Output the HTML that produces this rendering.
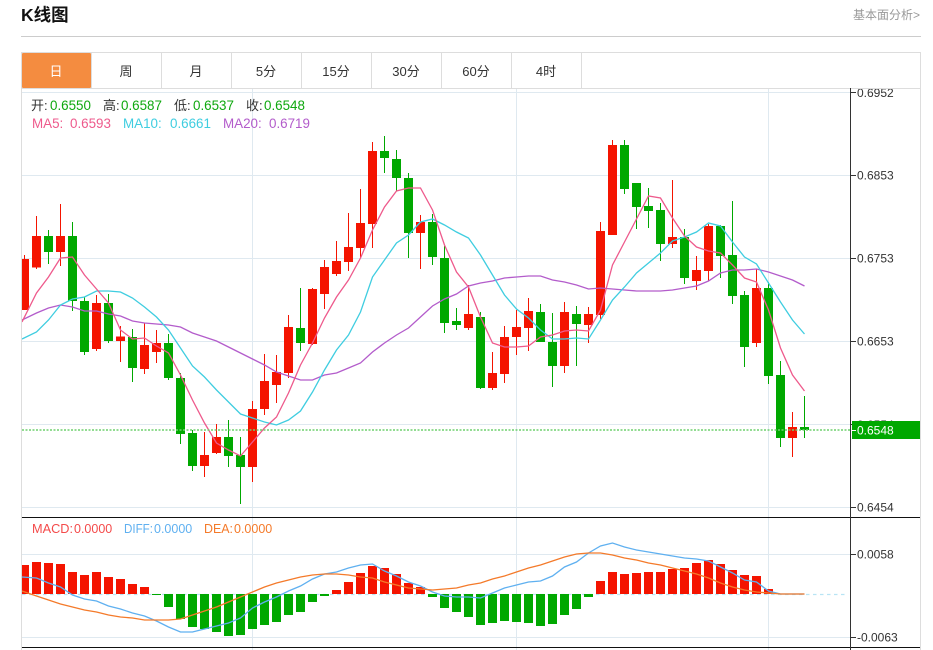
<!DOCTYPE html>
<html lang="zh">
<head>
<meta charset="utf-8">
<title>K线图</title>
<style>
html,body{margin:0;padding:0;background:#fff;width:933px;height:650px;overflow:hidden}
svg{display:block;position:absolute;left:0;top:0}
text{font-family:"Liberation Sans","Noto Sans CJK SC",sans-serif}
</style>
</head>
<body>
<svg width="933" height="650" viewBox="0 0 933 650" xmlns="http://www.w3.org/2000/svg">
<defs>
<clipPath id="c"><rect x="22" y="89" width="829" height="561"/></clipPath>
<clipPath id="ax"><rect x="852" y="89" width="68" height="561"/></clipPath>
</defs>

<!-- header -->
<text x="21" y="21" font-size="17.5" font-weight="700" fill="#111">K线图</text>
<text x="853" y="19" font-size="12" fill="#999">基本面分析&gt;</text>
<rect x="21" y="36" width="900" height="1" fill="#ccc"/>

<!-- frame -->
<rect x="21" y="52" width="900" height="1" fill="#ddd"/>
<rect x="21" y="52" width="1" height="598" fill="#ddd"/>
<rect x="920" y="52" width="1" height="598" fill="#ddd"/>
<rect x="22" y="88" width="898" height="1" fill="#ddd"/>
<rect x="22" y="53" width="69" height="35" rx="1" fill="#f48c40"/>
<path d="M91.5 53V88M161.5 53V88M231.5 53V88M301.5 53V88M371.5 53V88M441.5 53V88M511.5 53V88M581.5 53V88" stroke="#ddd" stroke-width="1" fill="none"/>
<g font-size="13" fill="#333" text-anchor="middle">
<text x="56" y="76" fill="#fff">日</text>
<text x="126" y="76">周</text>
<text x="196" y="76">月</text>
<text x="266" y="76">5分</text>
<text x="336" y="76">15分</text>
<text x="406" y="76">30分</text>
<text x="476" y="76">60分</text>
<text x="546" y="76">4时</text>
</g>

<!-- grid -->
<path d="M22 92.5H851M22 175.5H851M22 258.5H851M22 341.5H851M22 424.5H851M22 507.5H851M22 554.5H851M22 637.5H851M252.5 89V650M516.5 89V650M768.5 89V650" stroke="#dfe9f0" stroke-width="1" fill="none"/>

<g clip-path="url(#c)">
<!-- wicks -->
<path fill="none" stroke="#f41400" stroke-width="1" d="M24.5 255V310M36.5 216V269M60.5 204V266M96.5 295V351M120.5 326V362M144.5 323V374M156.5 330V363M204.5 432V477M216.5 424V454M252.5 401V482M264.5 354V415M276.5 355V403M288.5 315V378M312.5 288V345M324.5 260V309M336.5 241V276M348.5 213V271M360.5 189V258M372.5 142V248M420.5 215V269M468.5 285V330M492.5 352V390M504.5 326V383M516.5 310V355M528.5 298V351M564.5 302V373M588.5 307V343M600.5 222V319M612.5 140V235M672.5 180V248M696.5 256V290M708.5 224V281M756.5 269V347M792.5 412V457"/>
<path fill="none" stroke="#00a800" stroke-width="1" d="M48.5 230V264M72.5 222V311M84.5 297V355M108.5 294V343M132.5 329V382M168.5 334V380M180.5 373V444M192.5 430V471M228.5 420V467M240.5 437V504M300.5 288V351M384.5 136V173M396.5 150V191M408.5 173V258M432.5 214V265M444.5 246V333M456.5 308V330M480.5 312V389M540.5 304V342M552.5 313V387M576.5 306V366M624.5 140V194M636.5 183V229M648.5 188V228M660.5 203V261M684.5 229V284M720.5 225V278M732.5 201V304M744.5 291V367M768.5 282V384M780.5 361V447M804.5 396V438"/>
<!-- bodies -->
<path fill="#f41400" d="M20 259h9V310h-9zM32 236h9V267.5h-9zM56 236h9V252h-9zM92 303h9V349h-9zM116 336.500h9V341h-9zM140 345h9V369h-9zM152 343h9V352h-9zM200 455h9V466h-9zM212 437h9V453h-9zM248 409h9V467h-9zM260 381h9V409h-9zM272 372h9V385h-9zM284 327h9V373h-9zM308 289h9V344h-9zM320 267h9V294h-9zM332 261h9V274h-9zM344 247h9V262h-9zM356 223h9V248h-9zM368 151h9V224h-9zM416 222h9V233h-9zM464 314h9V328h-9zM488 373h9V388h-9zM500 337h9V374h-9zM512 327h9V337h-9zM524 311h9V328h-9zM560 312h9V366h-9zM584 314h9V325h-9zM596 231h9V315h-9zM608 145h9V235h-9zM668 237h9V244h-9zM692 270h9V281h-9zM704 226h9V271h-9zM752 288h9V343h-9zM788 427h9V438h-9z"/>
<path fill="#00a800" d="M44 236h9V252h-9zM68 236h9V301h-9zM80 301h9V352h-9zM104 303h9V341h-9zM128 337h9V368h-9zM164 343h9V378h-9zM176 378h9V434h-9zM188 433h9V466h-9zM224 437h9V456h-9zM236 455h9V467h-9zM296 328h9V343h-9zM380 151h9V158h-9zM392 159h9V178h-9zM404 178h9V233h-9zM428 222h9V257h-9zM440 258h9V323h-9zM452 321h9V325h-9zM476 317h9V388h-9zM536 312h9V342h-9zM548 342h9V366h-9zM572 314h9V324h-9zM620 145h9V189h-9zM632 183h9V207h-9zM644 206h9V211h-9zM656 210h9V244h-9zM680 237h9V278h-9zM716 226h9V256h-9zM728 255h9V296h-9zM740 295h9V347h-9zM764 288h9V376h-9zM776 375h9V438h-9zM800 427h9V430h-9z"/>
<!-- MA lines -->
<polyline fill="none" stroke="#b35ccb" stroke-width="1.3" points="22,320 36.500,313 48.500,308 60.500,305 72.500,307 84.500,311 96.500,311 108.500,314 120.500,316 132.500,321 144.500,323 156.500,324 168.500,325 180.500,327 192.500,333 204.500,337 216.500,341 228.500,347 240.500,353 252.500,359 264.500,365 276.500,372 288.500,376 300.500,380 312.500,380 324.500,375 336.500,373 348.500,368 360.500,363 372.500,352 384.500,343 396.500,335 408.500,328 420.500,317 432.500,306 444.500,299 456.500,294 468.500,286 480.500,283 492.500,281 504.500,278 516.500,277 528.500,276 540.500,276 552.500,280 564.500,282 576.500,285 588.500,289 600.500,288 612.500,289 624.500,290 636.500,291 648.500,291 660.500,291 672.500,290 684.500,288 696.500,286 708.500,281 720.500,273 732.500,270 744.500,270 756.500,269 768.500,272 780.500,276 792.500,280 804.500,286"/>
<polyline fill="none" stroke="#3fcde0" stroke-width="1.3" points="22,339 36.500,332 48.500,320 60.500,305 72.500,299 84.500,297 96.500,291 108.500,291 120.500,292 132.500,298 144.500,307 156.500,317 168.500,330 180.500,348 192.500,366 204.500,377 216.500,390 228.500,402 240.500,414 252.500,418 264.500,422 276.500,425 288.500,420 300.500,411 312.500,392 324.500,370 336.500,350 348.500,335 360.500,312 372.500,277 384.500,260 396.500,243 408.500,235 420.500,222 432.500,219 444.500,225 456.500,232 468.500,238 480.500,255 492.500,275 504.500,295 516.500,309 528.500,318 540.500,330 552.500,339 564.500,339 576.500,338 588.500,339 600.500,320 612.500,300 624.500,287 636.500,273 648.500,263 660.500,253 672.500,241 684.500,237 696.500,232 708.500,223 720.500,226 732.500,242 744.500,257 756.500,264 768.500,283 780.500,302 792.500,320 804.500,334"/>
<polyline fill="none" stroke="#ee5a8c" stroke-width="1.3" points="22,322 36.500,293 48.500,277 60.500,258 72.500,257 84.500,275 96.500,289 108.500,303 120.500,330 132.500,339 144.500,338 156.500,346 168.500,353 180.500,375 192.500,400 204.500,423 216.500,443 228.500,450 240.500,456 252.500,442 264.500,428 276.500,417 288.500,393 300.500,365 312.500,343 324.500,318 336.500,297 348.500,280 360.500,258 372.500,230 384.500,207 396.500,191 408.500,188 420.500,188 432.500,210 444.500,245 456.500,272 468.500,287 480.500,317 492.500,343 504.500,347 516.500,347 528.500,346 540.500,337 552.500,335 564.500,331 576.500,330 588.500,331 600.500,310 612.500,265 624.500,242 636.500,219 648.500,196 660.500,198 672.500,218 684.500,236 696.500,247 708.500,251 720.500,253 732.500,265 744.500,278 756.500,282 768.500,310 780.500,348 792.500,375 804.500,391"/>

<!-- price dotted -->
<path d="M22 430H851" stroke="#6fd06f" stroke-width="1.6" stroke-dasharray="2 1.500" fill="none"/>

<!-- MACD zero dashed -->
<path d="M22 594.500H848" stroke="#b8e4f4" stroke-width="1.3" stroke-dasharray="3.500 3.500" fill="none"/>
<!-- MACD bars -->
<path fill="#f41400" d="M20 565h9V594h-9zM32 562h9V594h-9zM44 563h9V594h-9zM56 564h9V594h-9zM68 572h9V594h-9zM80 575h9V594h-9zM92 572h9V594h-9zM104 577h9V594h-9zM116 579h9V594h-9zM128 584h9V594h-9zM140 587h9V594h-9zM332 590h9V594h-9zM344 582h9V594h-9zM356 573h9V594h-9zM368 566h9V594h-9zM380 568h9V594h-9zM392 574h9V594h-9zM404 583h9V594h-9zM416 587h9V594h-9zM608 572h9V594h-9zM596 581h9V594h-9zM620 574h9V594h-9zM632 573h9V594h-9zM644 572h9V594h-9zM656 572h9V594h-9zM668 569h9V594h-9zM680 568h9V594h-9zM692 563h9V594h-9zM704 560h9V594h-9zM716 564h9V594h-9zM728 570h9V594h-9zM740 575h9V594h-9zM752 576h9V594h-9zM764 589h9V594h-9z"/>
<path fill="#00a800" d="M152 594h9V595h-9zM164 594h9V607h-9zM176 594h9V619h-9zM188 594h9V627h-9zM200 594h9V629h-9zM212 594h9V632h-9zM224 594h9V636h-9zM236 594h9V635h-9zM248 594h9V629h-9zM260 594h9V625h-9zM272 594h9V622h-9zM284 594h9V615h-9zM296 594h9V612h-9zM308 594h9V602h-9zM320 594h9V596h-9zM428 594h9V597h-9zM440 594h9V608h-9zM452 594h9V612h-9zM464 594h9V617h-9zM476 594h9V625h-9zM488 594h9V623h-9zM500 594h9V621h-9zM512 594h9V622h-9zM524 594h9V623h-9zM536 594h9V626h-9zM548 594h9V624h-9zM560 594h9V615h-9zM572 594h9V609h-9zM584 594h9V597h-9z"/>
<!-- DIFF / DEA -->
<polyline fill="none" stroke="#5fb0f0" stroke-width="1.3" points="22,577 36.500,578 48.500,583 60.500,587 72.500,595 84.500,599 96.500,601 108.500,606 120.500,609 132.500,613 144.500,616 156.500,621 168.500,627 180.500,632 192.500,632 204.500,629 216.500,626 228.500,623 240.500,618 252.500,608 264.500,602 276.500,597 288.500,591 300.500,586 312.500,579 324.500,574 336.500,572 348.500,568 360.500,565 372.500,564 384.500,571 396.500,576 408.500,582 420.500,586 432.500,592 444.500,596 456.500,597 468.500,597 480.500,598 492.500,593 504.500,588 516.500,585 528.500,582 540.500,581 552.500,576 564.500,567 576.500,562 588.500,553 600.500,546 612.500,543 624.500,547 636.500,550 648.500,552 660.500,554 672.500,556 684.500,558 696.500,559 708.500,561 720.500,567 732.500,573 744.500,580 756.500,582 768.500,591 780.500,594 804.500,594"/>
<polyline fill="none" stroke="#f47a2a" stroke-width="1.3" points="22,591 36.500,596 48.500,600 60.500,604 72.500,607 84.500,610 96.500,612 108.500,615 120.500,617 132.500,618 144.500,620 156.500,620 168.500,620 180.500,619 192.500,615 204.500,611 216.500,607 228.500,602 240.500,597 252.500,592 264.500,587 276.500,583 288.500,580 300.500,577 312.500,575 324.500,574 336.500,574 348.500,575 360.500,577 372.500,578 384.500,582 396.500,585 408.500,588 420.500,589 432.500,590 444.500,589 456.500,588 468.500,585 480.500,583 492.500,579 504.500,576 516.500,572 528.500,568 540.500,565 552.500,561 564.500,557 576.500,554 588.500,553 600.500,553 612.500,555 624.500,558 636.500,560 648.500,563 660.500,565 672.500,568 684.500,571 696.500,574 708.500,578 720.500,583 732.500,587 744.500,590 756.500,592 768.500,593 780.500,594 804.500,594"/>
</g>

<!-- separators -->
<rect x="22" y="517" width="898" height="1" fill="#111"/>
<rect x="22" y="647" width="898" height="1" fill="#111"/>

<!-- axis -->
<rect x="850" y="88" width="1" height="562" fill="#333"/>
<path d="M851 92.500h5M851 175.500h5M851 258.500h5M851 341.500h5M851 424.500h5M851 507.500h5M851 554.500h5M851 637.500h5" stroke="#333" stroke-width="1" fill="none"/>
<g font-size="12" fill="#333" clip-path="url(#ax)">
<text x="857" y="97">0.6952</text>
<text x="857" y="179.500">0.6853</text>
<text x="857" y="262.500">0.6753</text>
<text x="857" y="345.500">0.6653</text>
<text x="857" y="429">0.6554</text>
<text x="857" y="511.500">0.6454</text>
<text x="857" y="558.500">0.0058</text>
<text x="857" y="641.500">-0.0063</text>
</g>
<rect x="852" y="421" width="68" height="18" fill="#00a800"/>
<rect x="852" y="430" width="4" height="1" fill="#fff"/>
<text x="857" y="434.500" font-size="12" fill="#fff">0.6548</text>

<!-- legends -->
<g font-size="13.400">
<text x="31" y="110" fill="#333" font-size="13">开:</text>
<text x="50" y="110" fill="#0fa80f">0.6550</text>
<text x="103" y="110" fill="#333" font-size="13">高:</text>
<text x="121" y="110" fill="#0fa80f">0.6587</text>
<text x="174" y="110" fill="#333" font-size="13">低:</text>
<text x="193" y="110" fill="#0fa80f">0.6537</text>
<text x="246" y="110" fill="#333" font-size="13">收:</text>
<text x="264" y="110" fill="#0fa80f">0.6548</text>
<text x="32" y="128" fill="#ee5a8c">MA5:</text>
<text x="70" y="128" fill="#ee5a8c">0.6593</text>
<text x="123" y="128" fill="#3fcde0">MA10:</text>
<text x="170" y="128" fill="#3fcde0">0.6661</text>
<text x="223" y="128" fill="#b35ccb">MA20:</text>
<text x="269" y="128" fill="#b35ccb">0.6719</text>
</g>
<g font-size="12.500">
<text x="32" y="533" fill="#f44a4a" textLength="41" lengthAdjust="spacingAndGlyphs">MACD:</text>
<text x="74" y="533" fill="#f44a4a">0.0000</text>
<text x="124" y="533" fill="#5fb0f0" textLength="29" lengthAdjust="spacingAndGlyphs">DIFF:</text>
<text x="154" y="533" fill="#5fb0f0">0.0000</text>
<text x="204" y="533" fill="#f47a2a" textLength="29" lengthAdjust="spacingAndGlyphs">DEA:</text>
<text x="234" y="533" fill="#f47a2a">0.0000</text>
</g>
</svg>
</body>
</html>
